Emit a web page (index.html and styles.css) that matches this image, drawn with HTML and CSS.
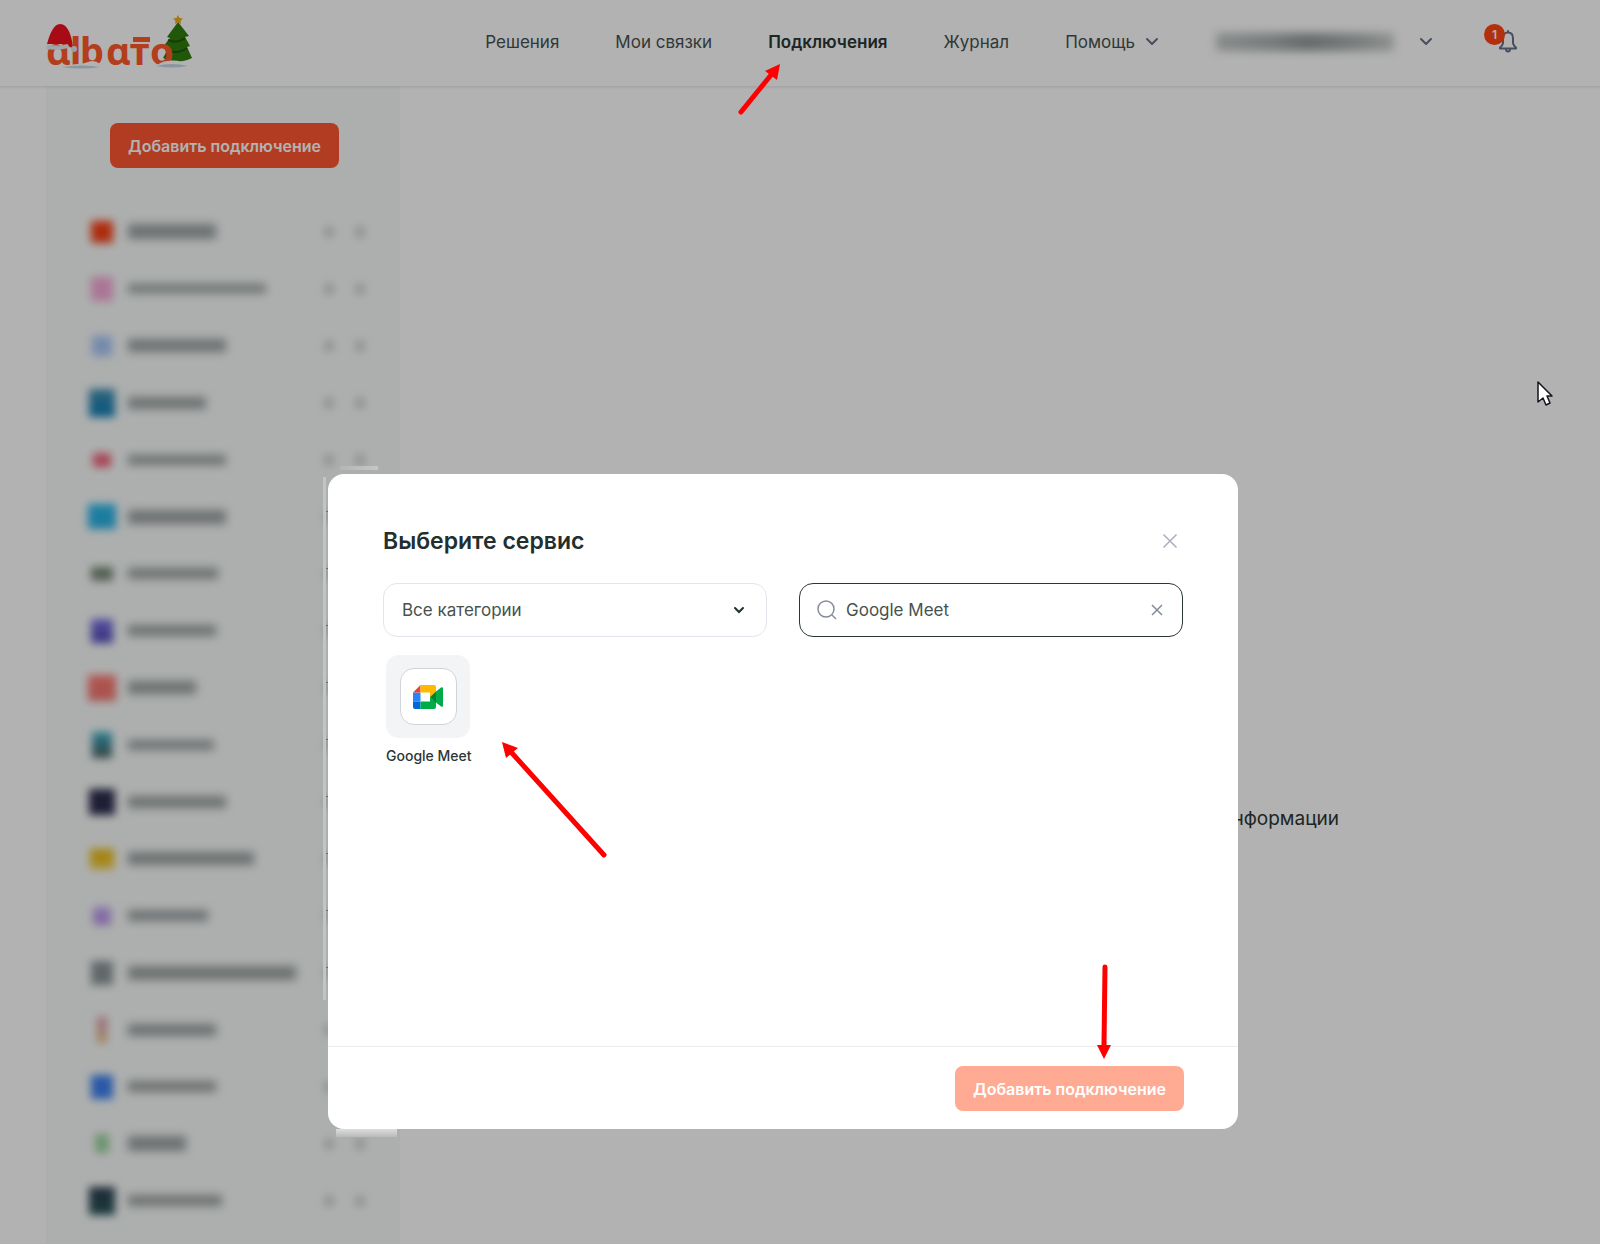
FILE: index.html
```html
<!DOCTYPE html>
<html lang="ru">
<head>
    <meta charset="UTF-8">
    <meta name="viewport" content="width=device-width, initial-scale=1.0">
    <title>Albato - Подключения</title>
    <link rel="stylesheet" href="styles.css">
</head>
<body>

<header class="header">
    <a class="logo" href="#" aria-label="albato">
        <svg width="148" height="70" viewBox="0 0 148 70">
            <!-- tree -->
            <path d="M126 52h7v6h-7z" fill="#5a2410"/>
            <path d="M132 15l11 14-4 1 5 9-3 1 5 11c-9 5-20 4-29 0l5-9-6-1 8-10-3-1z" fill="#2f7d0c"/>
            <path d="M122 33q9 4 17-2M120 43q11 5 21-2" stroke="#1d5a0a" stroke-width="2" fill="none"/>
            <path d="M132 8l1.500 3 3.500 0.500-2.500 2.500 0.500 3-3-1.500-3 1.500 0.500-3-2.500-2.500 3.500-0.500z" fill="#f0a81c"/>
            <text class="logo-text" x="0 24 34 60 84 104" y="58">ɑlbɑтo</text>
            <rect x="87" y="30" width="17" height="5" fill="#ff5a2c"/>
            <!-- snow -->
            <path d="M16 60q10-3 16-3 5 0 10-2 6-3 12 2l2 3z" fill="#fff"/>
            <path d="M16 60q20-3 38 0-20 3-38 0z" fill="#c3d8e6"/>
            <path d="M110 59q6-5 12-5 12-2 20 5z" fill="#fff"/>
            <path d="M110 59q16-4 32 0-16 3-32 0z" fill="#c3d8e6"/>
            <!-- hat -->
            <path d="M1 37C4 26 8 17 14 17c8 0 12 12 13 24-3 0-5-3-7-4z" fill="#f0101f"/>
            <path d="M1 37q10 3 21 0l1 4q-12 3-23 1z" fill="#e4eef5"/>
            <circle cx="28" cy="42" r="3" fill="#dbe8f0"/>
        </svg>
    </a>
    <nav class="nav">
        <a href="#">Решения</a>
        <a href="#">Мои связки</a>
        <a href="#" class="active">Подключения</a>
        <a href="#">Журнал</a>
        <a href="#" class="with-arrow">Помощь
            <svg class="chevron" width="12" height="8" viewBox="0 0 12 8"><path d="M1 1l5 5 5-5"/></svg>
        </a>
    </nav>
    <button class="account" type="button" aria-label="Аккаунт">
        <span class="account-name"></span>
        <svg class="chevron" width="12" height="8" viewBox="0 0 12 8"><path d="M1 1l5 5 5-5"/></svg>
    </button>
    <button class="bell" type="button" aria-label="Уведомления">
        <svg width="18" height="23" viewBox="0 0 18 23">
            <path d="M9 2.500c-3.500 0-5 2.500-5 6v4.500Q3.500 16 1 17.500V18.500h16V17.500Q14.500 16 14 13v-4.500c0-3.500-1.500-6-5-6zM9 2.500V1M7 19q0 2.500 2 2.500t2-2.500"/>
        </svg>
        <span class="badge">1</span>
    </button>
</header>

<div class="page">
    <aside class="sidebar">
        <button class="btn" type="button">Добавить подключение</button>
        <ul class="services" id="services"></ul>
    </aside>
    <main class="content">
        <p>информации</p>
    </main>
</div>

<div class="overlay">
    <div class="modal" role="dialog" aria-labelledby="modal-title">
        <span class="edge edge-top"></span>
        <span class="edge edge-left"></span>
        <span class="edge edge-ticks"></span>
        <span class="edge edge-bottom"></span>
        <div class="modal-body">
            <div class="modal-head">
                <h2 id="modal-title">Выберите сервис</h2>
                <button class="icon-btn" type="button" aria-label="Закрыть">
                    <svg width="16" height="16" viewBox="0 0 16 16"><path d="M1.500 1.500l13 13M14.500 1.500l-13 13"/></svg>
                </button>
            </div>
            <div class="filters">
                <div class="field">
                    <select aria-label="Категория">
                        <option>Все категории</option>
                    </select>
                    <svg class="field-arrow" width="12" height="8" viewBox="0 0 12 8"><path d="M2 2l4 4 4-4"/></svg>
                </div>
                <div class="field search">
                    <svg class="search-icon" width="20" height="20" viewBox="0 0 20 20"><circle cx="9" cy="9" r="8"/><path d="M15 15l4 4"/></svg>
                    <input type="text" value="Google Meet" aria-label="Поиск">
                    <button class="icon-btn" type="button" aria-label="Очистить">
                        <svg width="12" height="12" viewBox="0 0 12 12"><path d="M1 1l10 10M11 1L1 11"/></svg>
                    </button>
                </div>
            </div>
            <button class="service-card" type="button">
                <span class="service-tile">
                    <span class="service-icon">
                        <svg width="30" height="24" viewBox="0 0 30 24">
                            <path d="M0 7.500h7.500v9H0z" fill="#2684fc"/>
                            <path d="M0 16.500h7.500V24H2a2 2 0 0 1-2-2z" fill="#0066da"/>
                            <path d="M7.500 0v7.500H0z" fill="#ea4335"/>
                            <path d="M7.500 0h13.500a2 2 0 0 1 2 2v5l-6 5V7.500H7.500z" fill="#ffba00"/>
                            <path d="M7.500 16.500H17V12l6 5v5a2 2 0 0 1-2 2H7.500z" fill="#00ac47"/>
                            <path d="M17 12l6-5.500v11z" fill="#00832d"/>
                            <path d="M23 6.500l5-4q2-1 2 1v17q0 2-2 1l-5-4z" fill="#00ac47"/>
                        </svg>
                    </span>
                </span>
                <span class="service-name">Google Meet</span>
            </button>
        </div>
        <div class="modal-footer">
            <button class="btn" type="button" disabled>Добавить подключение</button>
        </div>
    </div>
</div>

<!-- pointers -->
<svg class="pointers" width="1600" height="1244" viewBox="0 0 1600 1244">
    <g stroke="#f00" stroke-width="5" stroke-linecap="round">
        <path d="M741 112L771 75"/>
        <path d="M604 855L511 752"/>
        <path d="M1105 967L1104 1046"/>
    </g>
    <path d="M780 64L765 71 777 80z" fill="#f00"/>
    <path d="M502 742L506 758 518 748z" fill="#f00"/>
    <path d="M1104 1059L1097 1045 1111 1045z" fill="#f00"/>
    <path d="M1538 382v20l5-4 3 7 4-2-3-7h5z" fill="#fff" stroke="#15151f" stroke-width="1.500" stroke-linejoin="round"/>
</svg>

<script>
    // top colour, bottom colour, icon width, icon height, name width, name height
    const services = [
        ['#ff3c10', '#f0451c', 22, 22, 88, 15],
        ['#f4a9d6', '#f4a9d6', 22, 24, 138, 9],
        ['#a9c6f8', '#a9c6f8', 20, 20, 98, 13],
        ['#4690b4', '#0b7cb4', 26, 28, 78, 12],
        ['#f0708a', '#f05a70', 18, 14, 98, 10],
        ['#28b8ec', '#2cb0e0', 28, 25, 98, 14],
        ['#6d8a68', '#888888', 22, 14, 90, 11],
        ['#7a74e4', '#4f48b8', 22, 24, 88, 11],
        ['#ff7a74', '#f07670', 28, 26, 68, 13],
        ['#38b4cc', '#4a5a5c', 20, 26, 86, 10],
        ['#2c2c4c', '#2c2c4c', 26, 26, 98, 12],
        ['#eab80a', '#f0cc40', 24, 20, 126, 13],
        ['#c8a4f4', '#b494e4', 18, 18, 80, 11],
        ['#8c9698', '#8c9698', 22, 24, 168, 14],
        ['#dc98b8', '#e8c080', 10, 26, 88, 12],
        ['#3c80f0', '#3c80f0', 22, 24, 88, 11],
        ['#9cd4a0', '#9cd4a0', 14, 19, 58, 15],
        ['#2c3c50', '#285458', 26, 28, 94, 11]
    ];

    const list = document.getElementById('services');
    services.forEach(function([top, bottom, w, h, nameW, nameH]) {
        const row = document.createElement('li');
        row.innerHTML = `
            <span class="pic"><i style="background: linear-gradient(${top}, ${bottom}); width: ${w}px; height: ${h}px"></i></span>
            <span class="name" style="width: ${nameW}px; height: ${nameH}px"></span>
            <span class="count"></span>
            <span class="toggle"></span>`;
        list.appendChild(row);
    });
</script>

</body>
</html>
```
FILE: styles.css
```css
* {
    box-sizing: border-box;
}
body {
    font-family: Inter, "Liberation Sans", sans-serif;
    font-size: 17px;
    color: #2b3635;
    background-color: #fff;
    margin: 0;
    min-height: 100vh;
    display: flex;
    flex-direction: column;
}
button {
    font-family: inherit;
    border: none;
    background: none;
    padding: 0;
    cursor: pointer;
}
svg {
    display: block;
    overflow: visible;
}

/* header */
.header {
    display: flex;
    align-items: center;
    height: 86px;
    padding: 0 83px 3px 46px;
    box-shadow: 0 1px 3px rgba(0, 0, 0, 0.12);
    position: relative;
}
.logo-text {
    font-family: "Noto Sans", sans-serif;
    font-size: 38px;
    font-weight: 700;
    fill: #ff5a2c;
}
.nav {
    display: flex;
    gap: 56px;
    margin-left: auto;
}
.nav a {
    color: #46524f;
    text-decoration: none;
}
.nav .active {
    color: #2b3635;
    font-weight: 600;
}
.with-arrow {
    display: flex;
    align-items: center;
    gap: 11px;
}
.chevron path,
.bell path {
    fill: none;
    stroke: #66708a;
    stroke-width: 2;
    stroke-linecap: round;
    stroke-linejoin: round;
}
.account {
    display: flex;
    align-items: center;
    gap: 26px;
    margin-left: 58px;
}
.account-name {
    width: 178px;
    height: 18px;
    background: linear-gradient(90deg, #c4c8c8, #acb2b2 30%, #929898 52%, #b0b4b4 80%, #ccd0d0);
    filter: blur(5px);
}
.bell {
    position: relative;
    margin-left: 67px;
}
.badge {
    position: absolute;
    left: -15px;
    top: -6px;
    width: 21px;
    height: 21px;
    border-radius: 50%;
    background-color: #ff4613;
    color: #fff;
    font-size: 12px;
    font-weight: 600;
    line-height: 21px;
}

/* page */
.page {
    display: flex;
    flex: 1;
    padding-left: 46px;
}
.sidebar {
    width: 354px;
    background-color: #f8fbfa;
    padding: 37px 30px 0 38px;
}
.btn {
    height: 45px;
    padding: 0 18px;
    border-radius: 8px;
    background-color: #ff5730;
    color: #fff;
    font-size: 16px;
    font-weight: 600;
}
.btn:disabled {
    background-color: #ffab94;
}
.sidebar .btn {
    margin-left: 26px;
}
.services {
    list-style: none;
    margin: 35px 0 0;
    padding: 0;
}
.services li {
    display: flex;
    align-items: center;
    height: 57px;
}
.pic {
    width: 36px;
    display: flex;
    justify-content: center;
    margin-right: 8px;
}
.pic i {
    filter: blur(4px);
}
.name {
    background-color: #9da3a3;
    filter: blur(5px);
}
.count,
.toggle {
    width: 8px;
    height: 10px;
    background-color: #c4c8ca;
    filter: blur(4px);
}
.count {
    margin-left: auto;
}
.toggle {
    margin: 0 6px 0 23px;
}
.content {
    flex: 1;
    display: flex;
    align-items: center;
    justify-content: flex-end;
    padding: 306px 261px 0 0;
    font-size: 19px;
}
.content p {
    margin: 0;
}

/* modal */
.overlay {
    position: fixed;
    inset: 0;
    display: flex;
    justify-content: center;
    align-items: flex-end;
    padding: 0 34px 115px 0;
    background-color: rgba(0, 0, 0, 0.3);
}
.modal {
    position: relative;
    width: 910px;
    background-color: #fff;
    border-radius: 16px;
}
.modal-body {
    min-height: 572px;
    padding: 52px 55px 0;
}
.modal-head {
    display: flex;
    align-items: center;
    justify-content: space-between;
    padding-right: 5px;
}
.modal-head h2 {
    margin: 0;
    font-size: 23px;
    font-weight: 600;
    line-height: 30px;
    color: #232f2e;
}
.icon-btn path,
.search-icon {
    fill: none;
    stroke: #858b9b;
    stroke-width: 1.5;
}
.modal-head .icon-btn path {
    stroke: #a9afc0;
}
.filters {
    display: grid;
    grid-template-columns: 1fr 1fr;
    gap: 32px;
    margin-top: 27px;
}
.field {
    position: relative;
    display: flex;
    align-items: center;
    height: 54px;
    border: 1px solid #e4e5ec;
    border-radius: 14px;
}
.field select,
.field input {
    width: 100%;
    border: none;
    outline: none;
    background: none;
    appearance: none;
    font-family: inherit;
    font-size: 17px;
    color: #46524f;
}
.field select {
    height: 100%;
    padding: 0 18px;
}
.field-arrow {
    position: absolute;
    right: 21px;
    fill: none;
    stroke: #232f2e;
    stroke-width: 2;
    stroke-linecap: round;
    pointer-events: none;
}
.search {
    border-color: #2b3635;
    padding: 0 19px 0 17px;
}
.search input {
    padding: 0 9px;
}
.search-icon {
    flex: none;
}
.service-card {
    display: block;
    width: 84px;
    margin: 18px 0 0 3px;
    color: #2b3635;
}
.service-tile {
    display: flex;
    align-items: center;
    justify-content: center;
    height: 83px;
    background-color: #f3f4f6;
    border-radius: 13px;
}
.service-icon {
    display: flex;
    align-items: center;
    justify-content: center;
    width: 57px;
    height: 57px;
    background-color: #fff;
    border: 1px solid #d0d4da;
    border-radius: 14px;
}
.service-name {
    display: block;
    margin-top: 9px;
    font-size: 14px;
    font-weight: 500;
    line-height: 18px;
    white-space: nowrap;
}
.modal-footer {
    display: flex;
    justify-content: flex-end;
    padding: 19px 54px 18px;
    border-top: 1px solid #ededf0;
}

/* light traces round the modal */
.edge {
    position: absolute;
}
.edge-top {
    left: 12px;
    top: -8px;
    width: 38px;
    height: 4px;
    background: linear-gradient(90deg, #b4b5b5, #c6c6c6);
}
.edge-left {
    left: -5px;
    top: 3px;
    bottom: 129px;
    width: 3px;
    background-color: #c3c5c5;
}
.edge-ticks {
    left: -2px;
    top: 37px;
    width: 2px;
    height: 458px;
    background: repeating-linear-gradient(#6a6a74 0 1px, transparent 1px 57px);
}
.edge-bottom {
    left: 8px;
    top: 100%;
    width: 61px;
    height: 8px;
    background: linear-gradient(#dcdedd, #b8baba);
}

.pointers {
    position: absolute;
    left: 0;
    top: 0;
    pointer-events: none;
}
```
